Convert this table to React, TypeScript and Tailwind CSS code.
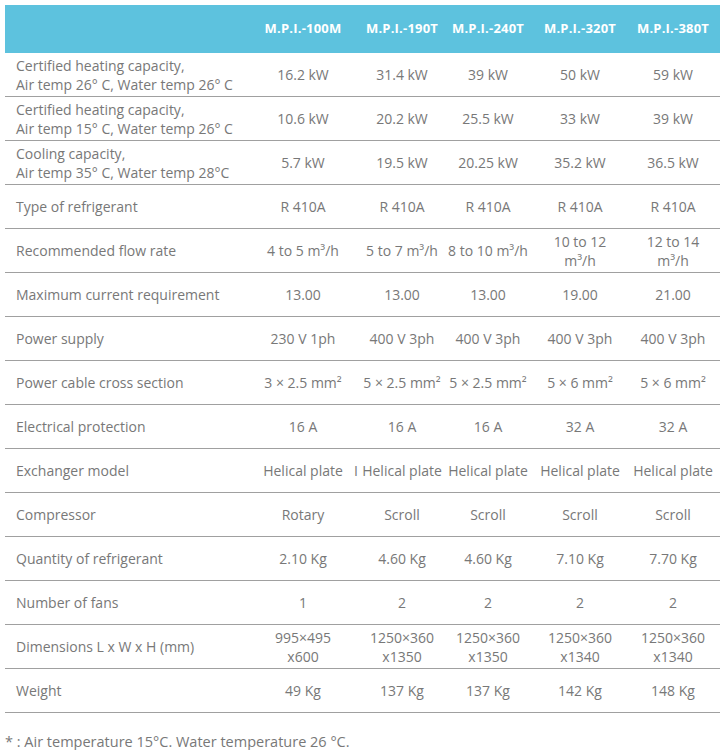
const rows: { label: string[]; values: string[][] }[] = [
  { label: ['Certified heating capacity,', 'Air temp 26° C, Water temp 26° C'], values: [['16.2 kW'], ['31.4 kW'], ['39 kW'], ['50 kW'], ['59 kW']] },
  { label: ['Certified heating capacity,', 'Air temp 15° C, Water temp 26° C'], values: [['10.6 kW'], ['20.2 kW'], ['25.5 kW'], ['33 kW'], ['39 kW']] },
  { label: ['Cooling capacity,', 'Air temp 35° C, Water temp 28°C'], values: [['5.7 kW'], ['19.5 kW'], ['20.25 kW'], ['35.2 kW'], ['36.5 kW']] },
  { label: ['Type of refrigerant'], values: [['R 410A'], ['R 410A'], ['R 410A'], ['R 410A'], ['R 410A']] },
  { label: ['Recommended flow rate'], values: [['4 to 5 m³/h'], ['5 to 7 m³/h'], ['8 to 10 m³/h'], ['10 to 12', 'm³/h'], ['12 to 14', 'm³/h']] },
  { label: ['Maximum current requirement'], values: [['13.00'], ['13.00'], ['13.00'], ['19.00'], ['21.00']] },
  { label: ['Power supply'], values: [['230 V 1ph'], ['400 V 3ph'], ['400 V 3ph'], ['400 V 3ph'], ['400 V 3ph']] },
  { label: ['Power cable cross section'], values: [['3 × 2.5 mm²'], ['5 × 2.5 mm²'], ['5 × 2.5 mm²'], ['5 × 6 mm²'], ['5 × 6 mm²']] },
  { label: ['Electrical protection'], values: [['16 A'], ['16 A'], ['16 A'], ['32 A'], ['32 A']] },
  { label: ['Exchanger model'], values: [['Helical plate'], ['Helical plate'], ['Helical plate'], ['Helical plate'], ['Helical plate']] },
  { label: ['Compressor'], values: [['Rotary'], ['Scroll'], ['Scroll'], ['Scroll'], ['Scroll']] },
  { label: ['Quantity of refrigerant'], values: [['2.10 Kg'], ['4.60 Kg'], ['4.60 Kg'], ['7.10 Kg'], ['7.70 Kg']] },
  { label: ['Number of fans'], values: [['1'], ['2'], ['2'], ['2'], ['2']] },
  { label: ['Dimensions L x W x H (mm)'], values: [['995×495', 'x600'], ['1250×360', 'x1350'], ['1250×360', 'x1350'], ['1250×360', 'x1340'], ['1250×360', 'x1340']] },
  { label: ['Weight'], values: [['49 Kg'], ['137 Kg'], ['137 Kg'], ['142 Kg'], ['148 Kg']] },
]

const models = ['M.P.I.-100M', 'M.P.I.-190T', 'M.P.I.-240T', 'M.P.I.-320T', 'M.P.I.-380T']

const grid = 'grid grid-cols-[239px_118px_80px_92px_92px_94px]'

export default function App() {
  return (
    <div className="w-[725px] h-[750px] bg-white pt-[5px] pl-[5px] font-['Open_Sans',sans-serif] text-[#787878]">
      <div className="w-[715px]">
        <div className={`${grid} h-[48px] bg-[#5dc2de] items-center`}>
          <div />
          {models.map(m => (
            <div key={m} className="flex justify-center whitespace-nowrap text-white font-bold text-[13px] tracking-[0.2px]">
              {m}
            </div>
          ))}
        </div>

        {rows.map((r, i) => (
          <div key={i} className={`${grid} h-[44px] items-center border-b-[1.5px] border-[#a0a0a0] text-[14px] leading-[19px]`}>
            <div className="pl-[11px] whitespace-nowrap">
              {r.label.map((l, j) => <div key={j}>{l}</div>)}
            </div>
            {r.values.map((v, j) => (
              <div key={j} className="relative flex flex-col items-center whitespace-nowrap">
                {v.map((t, k) => <div key={k}>{t}</div>)}
                {r.label[0] === 'Exchanger model' && j === 1 && (
                  <span className="absolute left-[-8px] top-0">I</span>
                )}
              </div>
            ))}
          </div>
        ))}

        <div className="mt-[18px] text-[14.5px] whitespace-nowrap">* : Air temperature 15°C. Water temperature 26 °C.</div>
      </div>
    </div>
  )
}
